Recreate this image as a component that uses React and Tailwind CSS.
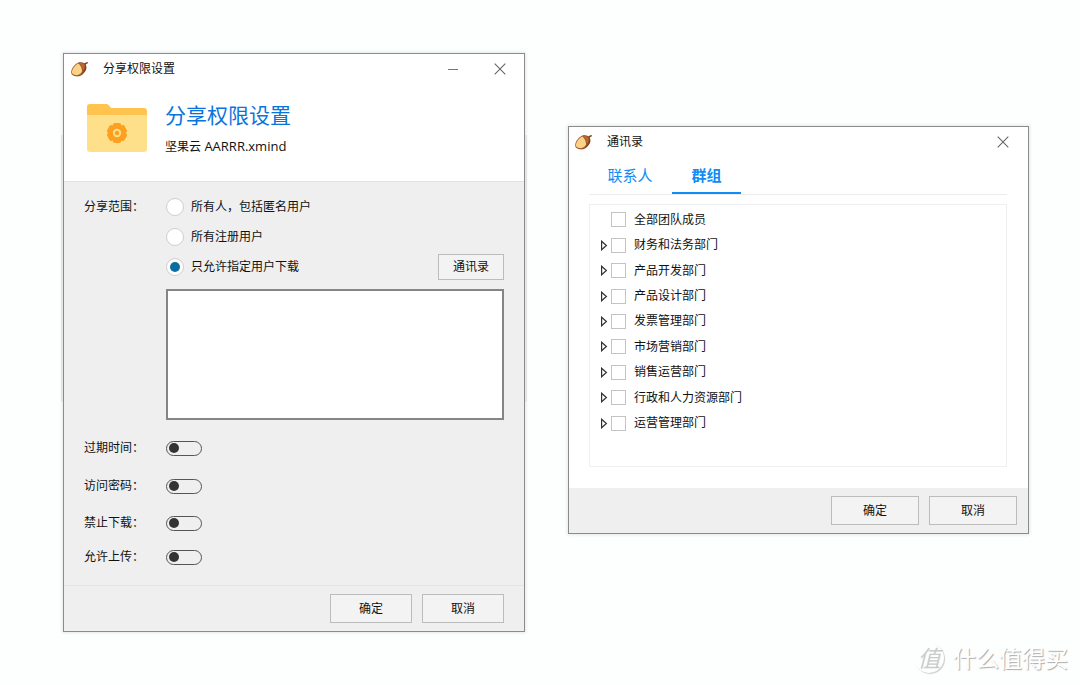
import { useState } from "react";

const DEPARTMENTS = [
  { name: "全部团队成员", leaf: true },
  { name: "财务和法务部门" },
  { name: "产品开发部门" },
  { name: "产品设计部门" },
  { name: "发票管理部门" },
  { name: "市场营销部门" },
  { name: "销售运营部门" },
  { name: "行政和人力资源部门" },
  { name: "运营管理部门" },
];

const SCOPES = ["所有人，包括匿名用户", "所有注册用户", "只允许指定用户下载"];

function AcornIcon() {
  return (
    <svg viewBox="0 0 18 16" className="h-4 w-[18px] shrink-0" aria-hidden="true">
      <path d="M13 2.800C14 1.500 15.400 1 17 1.200l-.2 1.300c-1.200 0-1.800.6-2.200 1.500z" fill="#7a3d18" />
      <path d="M7.500 1.600C10.500.6 13.800 1.600 15 4.200c.9 2.200.5 4.600-1.100 6.600-1.500 2.200-3.500 4-6.700 4.700z" fill="#84411a" />
      <path d="M8.400 1.800c2-.4 4.400.3 5.200 2 .8 2.200-.2 5-2.300 7.400z" fill="#b8692f" />
      <path d="M7.800 1.500C4.500 2.400.600 6.800.200 10.600c-.2 1.500.3 2.600 1 3.200 1.500 1.300 4 1.800 6 1.500 2.300-.6 4.300-2.500 5-4.700C12 7 10.500 3.500 7.800 1.500z" fill="#a05c28" />
      <path d="M7.600 2.400C4.600 3.400 1.300 7.300.9 10.600c-.1 1.200.2 2 .8 2.500 1.300 1 3.200 1.300 4.900 1 2-.5 3.900-2 4.500-3.900C10.900 7.400 9.800 4.300 7.600 2.400z" fill="#fbd28a" />
    </svg>
  );
}

function FolderIcon() {
  return (
    <svg viewBox="0 0 60 48" className="h-12 w-[60px] shrink-0" aria-hidden="true">
      <path d="M3 0h16c1.500 0 2.300.6 3.200 1.700C23.300 3.200 24.300 4 26 4h31a3 3 0 0 1 3 3v8H0V3a3 3 0 0 1 3-3z" fill="#ffc44d" />
      <path d="M0 11h60v34a3 3 0 0 1-3 3H3a3 3 0 0 1-3-3z" fill="#ffe08a" />
      <g fill="#ff9f1f" transform="translate(30 29)">
        <circle r="8.400" />
        <rect x="-4.200" y="-10" width="8.400" height="20" rx="2" />
        <rect x="-4.200" y="-10" width="8.400" height="20" rx="2" transform="rotate(60)" />
        <rect x="-4.200" y="-10" width="8.400" height="20" rx="2" transform="rotate(120)" />
        <circle r="4.200" fill="#ffe08a" />
        <circle r="2.200" />
      </g>
    </svg>
  );
}

function CloseButton() {
  return (
    <button type="button" aria-label="关闭" className="flex size-5 items-center justify-center">
      <svg viewBox="0 0 12 12" className="size-3" fill="none" stroke="#666" strokeWidth="1.1" aria-hidden="true">
        <path d="M.7.7l10.600 10.600M11.300.7.7 11.300" />
      </svg>
    </button>
  );
}

function PushButton({ children, className }) {
  return (
    <button type="button" className={`border border-[#bcbcbc] bg-[#f3f3f3] text-center ${className}`}>
      {children}
    </button>
  );
}

function ToggleRow({ label, className }) {
  return (
    <label className={`flex items-center ${className}`}>
      <span className="w-[82px] shrink-0">{label}</span>
      <input
        type="checkbox"
        role="switch"
        className="flex h-[15px] w-9 appearance-none items-center rounded-full border border-[#555] px-[2px] before:size-[10px] before:rounded-full before:bg-[#333] checked:justify-end"
      />
    </label>
  );
}

function ShareDialog() {
  const [scope, setScope] = useState(2);
  return (
    <section className="relative min-w-0">
      <span className="absolute -inset-x-[2px] top-[82px] h-[267px] bg-[#e0e1e1]" />
      <div className="relative border border-[#8a8c8b] bg-[#efefef] shadow-[0_0_3px_1px_#e6e9e8]">
        <div className="bg-white">
          <header className="flex h-[30px] items-center pr-[14px] pl-[7px]">
            <AcornIcon />
            <h1 className="ml-[14px] flex-1">分享权限设置</h1>
            <button type="button" aria-label="最小化" className="mr-[27px] flex size-5 items-center justify-center">
              <span className="h-px w-[10px] bg-[#777]" />
            </button>
            <CloseButton />
          </header>
          <div className="flex h-[98px] gap-[18px] border-b border-[#e2e2e2] pt-5 pl-[23px]">
            <FolderIcon />
            <div>
              <h2 className="-mt-[3px] text-[21px] leading-7 text-[#0b74da]">分享权限设置</h2>
              <p className="mt-[7px] text-[13px] leading-5">
                <span className="text-xs">坚果云</span> AARRR.xmind
              </p>
            </div>
          </div>
        </div>

        <div className="h-[404px] border-b border-[#e4e4e4] px-5">
          <div className="flex pt-[10px]">
            <span id="scope-label" className="w-[82px] shrink-0 leading-[30px]">
              分享范围：
            </span>
            <div role="radiogroup" aria-labelledby="scope-label" className="flex-1">
              {SCOPES.map((name, i) => (
                <div key={name} className="flex h-[30px] items-center justify-between">
                  <label className="flex items-center gap-[7px]">
                    <input
                      type="radio"
                      name="scope"
                      checked={scope === i}
                      onChange={() => setScope(i)}
                      className="flex size-[18px] appearance-none items-center justify-center rounded-full border border-[#cfcfcf] bg-white before:size-[10px] before:rounded-full checked:before:bg-[#0a6ea0]"
                    />
                    {name}
                  </label>
                  {i === 2 && <PushButton className="h-[26px] w-[66px]">通讯录</PushButton>}
                </div>
              ))}
              <textarea
                aria-label="指定用户"
                className="mt-[7px] block h-[131px] w-full resize-none border-2 border-[#858585] bg-white p-1 outline-none"
              />
            </div>
          </div>
          <div className="pt-[18px]">
            <ToggleRow label="过期时间：" className="h-5" />
            <ToggleRow label="访问密码：" className="mt-[18px] h-5" />
            <ToggleRow label="禁止下载：" className="mt-[17px] h-5" />
            <ToggleRow label="允许上传：" className="mt-[14px] h-5" />
          </div>
        </div>

        <footer className="flex h-[45px] items-center justify-end gap-[10px] pr-5">
          <PushButton className="h-[29px] w-[82px]">确定</PushButton>
          <PushButton className="h-[29px] w-[82px]">取消</PushButton>
        </footer>
      </div>
    </section>
  );
}

function ContactsDialog() {
  const [tab, setTab] = useState("群组");
  return (
    <section className="mt-[73px] min-w-0 border border-[#8a8c8b] bg-white shadow-[0_0_3px_1px_#e6e9e8]">
      <header className="flex h-[30px] items-center pr-[15px] pl-[6px]">
        <AcornIcon />
        <h1 className="ml-[14px] flex-1">通讯录</h1>
        <CloseButton />
      </header>
      <div className="pr-[21px] pl-5">
        <div role="tablist" className="flex h-[38px] border-b border-[#ececec] text-[15px] text-[#0f8cf5]">
          {["联系人", "群组"].map((name) => (
            <button
              key={name}
              type="button"
              role="tab"
              aria-selected={tab === name}
              onClick={() => setTab(name)}
              className={
                tab === name
                  ? "w-[69px] border-b-2 border-[#0f8cf5] font-bold"
                  : "mr-[1px] w-[82px] border-b-2 border-transparent"
              }
            >
              {name}
            </button>
          ))}
        </div>
        <div className="mt-[9px] h-[263px] border border-[#efefef] pt-[2px]">
          <ul className="grid h-[229px] auto-rows-fr">
            {DEPARTMENTS.map(({ name, leaf }) => (
              <li key={name} className="flex items-center pl-[10px]">
                {leaf ? (
                  <span className="w-[11px]" />
                ) : (
                  <button type="button" aria-label="展开" className="w-[11px]">
                    <svg viewBox="0 0 8 11" className="h-[11px] w-2" fill="none" stroke="#333" strokeWidth="1.2" aria-hidden="true">
                      <path d="M1.600 1.200v8.600L6.400 5.500z" />
                    </svg>
                  </button>
                )}
                <label className="flex items-center gap-2">
                  <input type="checkbox" className="size-[15px] appearance-none border border-[#c4c4c4] bg-white checked:bg-[#0f8cf5]" />
                  {name}
                </label>
              </li>
            ))}
          </ul>
        </div>
      </div>
      <footer className="mt-[21px] flex h-[45px] items-center justify-end gap-[10px] bg-[#efefef] pr-[11px]">
        <PushButton className="h-[29px] w-[88px]">确定</PushButton>
        <PushButton className="h-[29px] w-[88px]">取消</PushButton>
      </footer>
    </section>
  );
}

function Watermark() {
  return (
    <div className="absolute right-3 bottom-[11px] flex items-center gap-[9px] text-white [text-shadow:1px_1px_1px_#aaa]">
      <span className="flex size-[30px] items-center justify-center rounded-full text-[23px] leading-none text-[#cbcbcb] italic shadow-[1px_1px_1px_#ccc] [text-shadow:none]">
        值
      </span>
      <span className="text-[23px] leading-8">什么值得买</span>
    </div>
  );
}

export default function App() {
  return (
    <main className="relative grid min-h-screen grid-cols-[462fr_461fr] items-start gap-[43px] bg-[#fdfefe] pt-[53px] pr-[51px] pb-[53px] pl-[63px] font-['Open_Sans','Noto_Sans_CJK_SC',sans-serif] text-xs text-[#111]">
      <ShareDialog />
      <ContactsDialog />
      <Watermark />
    </main>
  );
}
